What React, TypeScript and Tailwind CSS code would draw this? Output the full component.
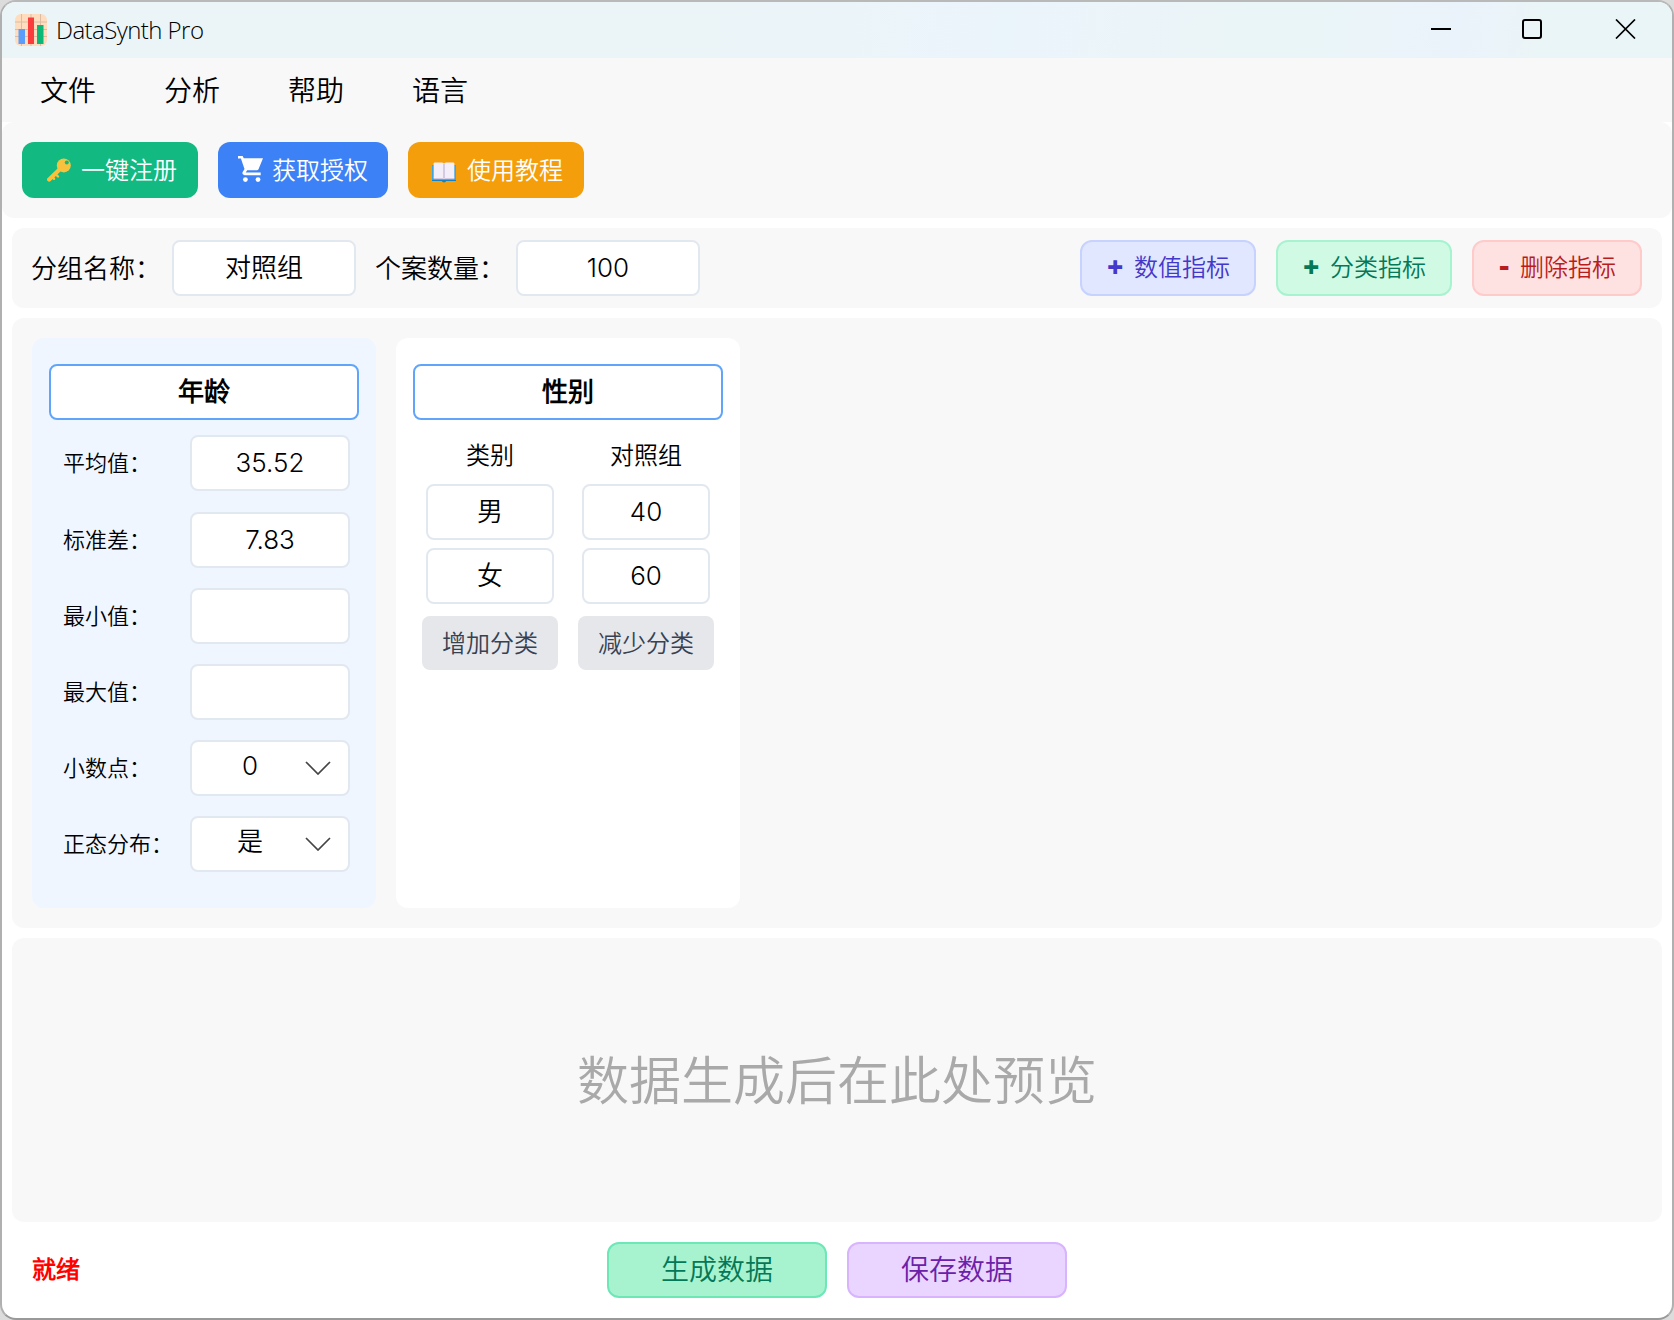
import type { ReactNode } from "react";

const numericFields = [
  { label: "平均值：", value: "35.52" },
  { label: "标准差：", value: "7.83" },
  { label: "最小值：", value: "" },
  { label: "最大值：", value: "" },
];

const selectFields = [
  { label: "小数点：", value: "0" },
  { label: "正态分布：", value: "是" },
];

const categories = [
  { name: "男", count: "40" },
  { name: "女", count: "60" },
];

function AppIcon() {
  return (
    <svg width="32" height="32" viewBox="0 0 32 32" className="shrink-0">
      <rect width="32" height="32" rx="6" fill="#fedcbd" />
      <path d="M6.5 0v32M16 0v32M25.5 0v32M0 8h32M0 15.5h32M0 22.5h32" stroke="#dcbda4" strokeWidth="1" />
      <rect x="3.5" y="15" width="6.5" height="15" fill="#5c9dfb" />
      <rect x="13" y="3.5" width="6" height="26.5" fill="#fb3c3c" />
      <rect x="22" y="11" width="6.5" height="19" fill="#0cb878" />
    </svg>
  );
}

function KeyIcon() {
  return (
    <svg width="24" height="24" viewBox="0 0 24 24" className="shrink-0">
      <path d="M12.5 11.5 2.2 21.6" stroke="#fac13c" strokeWidth="4.2" strokeLinecap="round" />
      <path d="M9 16.5l2 2M5.5 19l1.5 1.8" stroke="#fac13c" strokeWidth="2.4" strokeLinecap="round" />
      <circle cx="16.8" cy="7.4" r="7" fill="#fac13c" />
      <circle cx="19.8" cy="4.6" r="2" fill="#10b981" />
    </svg>
  );
}

function CartIcon() {
  return (
    <svg width="26" height="26" viewBox="0 0 26 26" className="shrink-0" fill="#fff">
      <path d="M0 0h4.6l1.2 2.2H25L20.6 13a2 2 0 0 1-1.9 1.3H9.2L7.7 16.6h15v2.6H6.6a2.2 2.2 0 0 1-1.9-3.3l1.8-2.9L2.9 2.4H0z" />
      <circle cx="7.4" cy="23.6" r="2.4" />
      <circle cx="20" cy="23.6" r="2.4" />
    </svg>
  );
}

function BookIcon() {
  return (
    <svg width="24" height="21" viewBox="0 0 24 21" className="shrink-0">
      <path d="M0 3h24v16H14.2a2.4 2.4 0 0 1-4.4 0H0z" fill="#0f83c9" />
      <path d="M0 3h1.6v15H0zM22.4 3H24v15h-1.6z" fill="#3fa5dc" />
      <path d="M1.6 15.6h20.8v2H1.6z" fill="#cbbcd8" />
      <path d="M1.6 1.6Q1.6.4 3 .4h7Q12 .4 12 2 12 .4 14 .4h7q1.4 0 1.4 1.2v14.6H13.5L12 17l-1.5-.8H1.6z" fill="#f3eef8" />
      <path d="M12 2v14.4" stroke="#c3b3d3" strokeWidth="1.2" />
    </svg>
  );
}

function Box({ className = "", children }: { className?: string; children?: ReactNode }) {
  return (
    <div className={`flex h-14 items-center justify-center rounded-lg border-2 bg-white text-[26px] leading-none ${className}`}>
      {children}
    </div>
  );
}

function TitleBar() {
  return (
    <div className="flex h-14 shrink-0 items-center bg-[linear-gradient(100deg,#ebf5f8_0%,#ebf5f9_50%,#eaf4fb_60%,#ebf5f8_72%,#eaf5f9_80%,#eaf3fb_87%,#eaf5f7_92%)] pl-[13px]">
      <AppIcon />
      <span className="ml-[9px] font-['Open_Sans',sans-serif] text-2xl font-[360] tracking-[-0.55px]">DataSynth Pro</span>
      <svg width="206" height="20" viewBox="0 0 206 20" fill="none" stroke="#000" strokeWidth="2" className="mr-[35px] mb-0.5 ml-auto">
        <path d="M0 10h20" />
        <rect x="92" y="1" width="18" height="18" rx="2" />
        <path d="M185 .5l19 19M204 .5l-19 19" strokeWidth="1.7" />
      </svg>
    </div>
  );
}

function Menu() {
  return (
    <div className="flex h-16 shrink-0 items-center gap-[68px] bg-[#f8f8f8] pt-0.5 pl-[38px] text-[28px] leading-none">
      {["文件", "分析", "帮助", "语言"].map((item) => (
        <span key={item}>{item}</span>
      ))}
    </div>
  );
}

function Toolbar() {
  return (
    <div className="flex h-24 shrink-0 items-start gap-5 rounded-xl bg-[#f8f8f8] px-5 pt-5 text-2xl leading-none font-normal text-white">
      <button className="flex h-14 w-44 items-center rounded-xl bg-[#12b981] pl-[25px]">
        <KeyIcon />
        <span className="mt-0.5 ml-2.5">一键注册</span>
      </button>
      <button className="flex h-14 w-[170px] items-center rounded-xl bg-[#3c82f6] pl-5">
        <span className="mb-0.5">
          <CartIcon />
        </span>
        <span className="mt-px ml-2">获取授权</span>
      </button>
      <button className="flex h-14 w-44 items-center rounded-xl bg-[#f59e0b] pl-6">
        <span className="mt-1">
          <BookIcon />
        </span>
        <span className="mt-0.5 ml-[11px]">使用教程</span>
      </button>
    </div>
  );
}

function GroupBar() {
  return (
    <div className="mx-2.5 mt-2.5 flex h-20 shrink-0 items-center rounded-xl bg-[#f8f8f8] pr-5 pl-[19px] text-[26px] leading-none">
      <span className="mt-px w-[141px] whitespace-nowrap">分组名称：</span>
      <Box className="w-[184px] border-slate-200">对照组</Box>
      <span className="mt-px ml-[19px] w-[141px] whitespace-nowrap">个案数量：</span>
      <Box className="w-[184px] border-slate-200">100</Box>
      <div className="ml-auto flex gap-5 text-2xl leading-none">
        <button className="flex h-14 w-44 items-center rounded-xl border-2 border-[#c7d2fe] bg-[#e0e7ff] pl-[25px] text-[#4338ca]">
          <span className="w-[27px] pb-1 text-left font-['Open_Sans'] text-[28px] font-extrabold">+</span>
          数值指标
        </button>
        <button className="flex h-14 w-44 items-center rounded-xl border-2 border-[#a7f3d0] bg-[#d1fae5] pl-[25px] text-[#047857]">
          <span className="w-[27px] pb-1 text-left font-['Open_Sans'] text-[28px] font-extrabold">+</span>
          分类指标
        </button>
        <button className="flex h-14 w-[170px] items-center rounded-xl border-2 border-[#fecaca] bg-[#fee2e2] pl-[25px] text-[#b91c1c]">
          <span className="w-[21px] pb-1.5 text-left font-['Open_Sans'] text-[32px] font-bold">-</span>
          删除指标
        </button>
      </div>
    </div>
  );
}

function Chevron() {
  return (
    <svg width="26" height="14" viewBox="0 0 26 14" fill="none" stroke="#444" strokeWidth="1.7" className="mr-[17px] mb-px">
      <path d="M1 1l12 12L25 1" />
    </svg>
  );
}

function NumericCard() {
  return (
    <div className="w-[344px] rounded-xl bg-[#eff6ff] px-[17px] pt-[26px]">
      <Box className="border-[#60a5fa] font-bold">年龄</Box>
      <div className="mt-[15px] flex flex-col gap-5 pr-[9px] pl-[14px] text-[22px] leading-none">
        {numericFields.map((f, i) => (
          <div key={f.label} className={i === 0 ? "mb-px flex items-center justify-between" : "flex items-center justify-between"}>
            <span>{f.label}</span>
            <Box className="w-40 border-slate-200">{f.value}</Box>
          </div>
        ))}
        {selectFields.map((f) => (
          <div key={f.label} className="flex items-center justify-between">
            <span className="whitespace-nowrap">{f.label}</span>
            <Box className="w-40 border-slate-200">
              <span className="flex-1 pb-1 pl-[3px] text-center">{f.value}</span>
              <Chevron />
            </Box>
          </div>
        ))}
      </div>
    </div>
  );
}

function CategoryCard() {
  return (
    <div className="w-[344px] rounded-xl bg-white px-[17px] pt-[26px]">
      <Box className="border-[#60a5fa] font-bold">性别</Box>
      <div className="mt-6 grid grid-cols-[136px_136px] justify-center gap-x-5 text-center text-2xl leading-none">
        <span>类别</span>
        <span>对照组</span>
      </div>
      <div className="mt-4 grid grid-cols-[128px_128px] justify-center gap-x-7 gap-y-2">
        {categories.map((c) => [
          <Box key={c.name} className="border-slate-200">{c.name}</Box>,
          <Box key={c.count} className="border-slate-200">{c.count}</Box>,
        ])}
      </div>
      <div className="mt-3 flex justify-center gap-5 text-2xl leading-none text-[#374151]">
        <button className="h-[54px] w-[136px] rounded-lg bg-[#e5e7eb] pt-0.5">增加分类</button>
        <button className="h-[54px] w-[136px] rounded-lg bg-[#e5e7eb] pt-0.5">减少分类</button>
      </div>
    </div>
  );
}

export default function App() {
  return (
    <div className="h-[1320px] w-[1674px] bg-[#dcdcdc]">
      <div className="flex h-full w-full flex-col overflow-hidden rounded-[16px] border-2 border-t-[#b9b9b9] border-r-[#b0b0b0] border-b-[#999] border-l-[#b0b0b0] bg-white font-['Inter','Noto_Sans_CJK_SC_DemiLight','Noto_Sans_CJK_SC',sans-serif] font-[350] text-black">
        <TitleBar />
        <Menu />
        <Toolbar />
        <GroupBar />
        <div className="mx-2.5 mt-2.5 flex h-[610px] shrink-0 gap-5 rounded-xl bg-[#f8f8f8] p-5">
          <NumericCard />
          <CategoryCard />
        </div>
        <div className="mx-2.5 mt-2.5 flex h-[284px] shrink-0 items-center justify-center rounded-xl bg-[#f8f8f8] pt-1 text-[52px] leading-none font-normal text-[#a9a9a9]">
          数据生成后在此处预览
        </div>
        <div className="grid flex-1 grid-cols-[1fr_auto_1fr] items-center px-[30px] text-[28px] leading-none">
          <span className="text-2xl leading-none font-bold text-[#ff0000]">就绪</span>
          <div className="flex gap-5">
            <button className="h-14 w-[220px] rounded-xl border-2 border-[#6ee7b7] bg-[#a7f3d0] text-[#047857]">生成数据</button>
            <button className="h-14 w-[220px] rounded-xl border-2 border-[#d8b4fe] bg-[#e9d5ff] text-[#6b21a8]">保存数据</button>
          </div>
        </div>
      </div>
    </div>
  );
}
